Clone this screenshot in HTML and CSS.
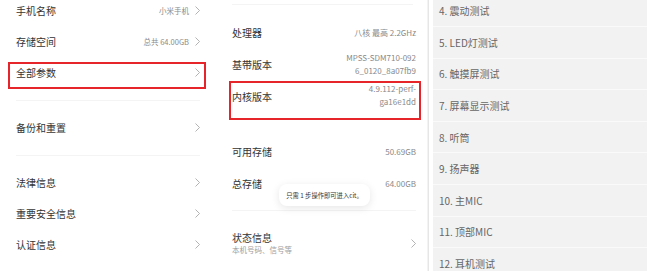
FILE: index.html
```html
<!DOCTYPE html>
<html lang="zh-CN">
<head>
    <meta charset="UTF-8">
    <meta name="viewport" content="width=device-width, initial-scale=1.0">
    <title>全部参数</title>
    <link rel="stylesheet" href="styles.css">
</head>
<body>

<div class="screens">
    <!-- 我的设备 -->
    <div class="panel panel-device">
        <div class="list list-top">
            <div class="row">
                <span class="label">手机名称</span>
                <span class="value">小米手机</span>
                <svg class="chevron" viewBox="0 0 5 9"><polyline points="0.5,0.5 4.5,4.5 0.5,8.5"/></svg>
            </div>
            <div class="row">
                <span class="label">存储空间</span>
                <span class="value">总共 64.00GB</span>
                <svg class="chevron" viewBox="0 0 5 9"><polyline points="0.5,0.5 4.5,4.5 0.5,8.5"/></svg>
            </div>
            <div class="row marked marked-wide">
                <span class="label">全部参数</span>
                <svg class="chevron" viewBox="0 0 5 9"><polyline points="0.5,0.5 4.5,4.5 0.5,8.5"/></svg>
            </div>
        </div>
        <div class="divider"></div>
        <div class="list">
            <div class="row">
                <span class="label">备份和重置</span>
                <svg class="chevron" viewBox="0 0 5 9"><polyline points="0.5,0.5 4.5,4.5 0.5,8.5"/></svg>
            </div>
        </div>
        <div class="divider"></div>
        <div class="list">
            <div class="row">
                <span class="label">法律信息</span>
                <svg class="chevron" viewBox="0 0 5 9"><polyline points="0.5,0.5 4.5,4.5 0.5,8.5"/></svg>
            </div>
            <div class="row">
                <span class="label">重要安全信息</span>
                <svg class="chevron" viewBox="0 0 5 9"><polyline points="0.5,0.5 4.5,4.5 0.5,8.5"/></svg>
            </div>
            <div class="row">
                <span class="label">认证信息</span>
                <svg class="chevron" viewBox="0 0 5 9"><polyline points="0.5,0.5 4.5,4.5 0.5,8.5"/></svg>
            </div>
        </div>
    </div>

    <!-- 全部参数 -->
    <div class="panel panel-params">
        <div class="divider divider-top"></div>
        <div class="list list-specs">
            <div class="row row-spec">
                <span class="label">处理器</span>
                <span class="value">八核 最高 2.2GHz</span>
            </div>
            <div class="row row-spec">
                <span class="label">基带版本</span>
                <span class="value value-multi">MPSS-SDM710-092<br>6_0120_8a07fb9</span>
            </div>
            <div class="row row-spec marked marked-kernel">
                <span class="label">内核版本</span>
                <span class="value value-multi value-up">4.9.112-perf-<br>ga16e1dd</span>
            </div>
        </div>
        <div class="list list-storage">
            <div class="row row-spec">
                <span class="label">可用存储</span>
                <span class="value">50.69GB</span>
            </div>
            <div class="row row-spec">
                <span class="label">总存储</span>
                <span class="value">64.00GB</span>
            </div>
        </div>
        <div class="divider divider-mid"></div>
        <div class="row row-status">
            <div class="status-text">
                <span class="label">状态信息</span>
                <span class="sub">本机号码、信号等</span>
            </div>
            <svg class="chevron" viewBox="0 0 5 9"><polyline points="0.5,0.5 4.5,4.5 0.5,8.5"/></svg>
        </div>
        <div class="toast">只需 1 步操作即可进入cit。</div>
    </div>

    <!-- CIT 测试列表 -->
    <div class="panel panel-cit">
        <ul class="tests">
            <li>4. 震动测试</li>
            <li>5. LED灯测试</li>
            <li>6. 触摸屏测试</li>
            <li>7. 屏幕显示测试</li>
            <li>8. 听筒</li>
            <li>9. 扬声器</li>
            <li>10. 主MIC</li>
            <li>11. 顶部MIC</li>
            <li>12. 耳机测试</li>
        </ul>
    </div>
</div>

</body>
</html>
```

FILE: styles.css
```css
body {
    margin: 0;
    padding: 0;
    font-family: "Noto Sans CJK SC", "Noto Sans", sans-serif;
    background: #fff;
    color: #333;
}

.screens {
    display: flex;
    width: 650px;
    height: 271px;
    overflow: hidden;
}

.panel {
    box-sizing: border-box;
    height: 271px;
    position: relative;
}

.panel-device {
    width: 215px;
    padding: 0 15px 0 16px;
}

.panel-params {
    width: 213px;
    padding: 0 11px 0 17px;
    border-right: 1px solid #f3f3f3;
}

.panel-cit {
    width: 222px;
    border-left: 1px solid #e6e6e6;
    padding: 0 3px 0 4px;
}

.list-top {
    margin-top: -5px;
}

.row {
    display: flex;
    align-items: center;
    height: 31px;
    position: relative;
}

.label {
    font-size: 10px;
    color: #333;
    flex: 1;
}

.value {
    font-size: 7.5px;
    color: #8a8a8a;
    margin-right: 6px;
}

.chevron {
    width: 5px;
    height: 9px;
    fill: none;
    stroke: #a0a0a0;
    stroke-width: 0.8;
}

.divider {
    height: 1px;
    background: #f4f4f4;
    margin: 12px 0 11px;
}

/* red annotation boxes */
.marked::after {
    content: "";
    position: absolute;
    border: 2px solid #e5252a;
    pointer-events: none;
}

.marked-wide::after {
    top: 5px;
    bottom: -1px;
    left: -8px;
    right: -6px;
}

.marked-kernel::after {
    top: 1px;
    bottom: -8px;
    left: -3px;
    right: -5px;
}

.divider-top {
    margin: 4px 3px 11px 0;
}

.row-spec {
    height: 32px;
}

.row-spec .value {
    margin-right: 0;
    text-align: right;
    font-size: 8px;
}

.value-multi {
    line-height: 13px;
}

.value-up {
    position: relative;
    top: -1.5px;
}

.list-storage {
    margin-top: 23px;
}

.divider-mid {
    margin: 11px 0 14px;
}

.row-status {
    height: 36px;
}

.status-text {
    display: flex;
    flex-direction: column;
    flex: 1;
}

.status-text .label {
    line-height: 13px;
}

.sub {
    font-size: 7.5px;
    color: #a0a0a0;
    line-height: 11px;
}

.toast {
    position: absolute;
    left: 64px;
    top: 184px;
    width: 91px;
    height: 22px;
    background: #fff;
    border-radius: 8px;
    box-shadow: 0 2px 8px rgba(0, 0, 0, 0.1);
    font-size: 6.3px;
    color: #333;
    display: flex;
    align-items: center;
    justify-content: center;
    white-space: nowrap;
}

.tests {
    list-style: none;
    margin: -4.5px 0 0;
    padding: 0;
}

.tests li {
    box-sizing: border-box;
    height: 31.6px;
    background: #f2f2f2;
    border-bottom: 1px solid #fafafa;
    padding-left: 6px;
    display: flex;
    align-items: center;
    font-size: 10px;
    color: #666;
}
```
